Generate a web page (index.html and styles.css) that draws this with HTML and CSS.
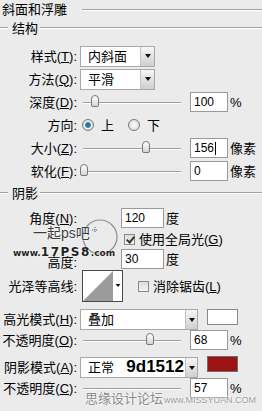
FILE: index.html
```html
<!DOCTYPE html>
<html lang="zh">

<head>
    <meta charset="UTF-8">
    <title>斜面和浮雕</title>
    <link rel="stylesheet" href="styles.css">
</head>

<body>
    <div class="dlg">
        <div class="title"><span>斜面和浮雕</span><i class="rule"></i></div>

        <div class="legend"><i class="rule lead"></i><span>结构</span><i class="rule"></i></div>
        <div class="group struct">
            <div class="row">
                <div class="lbl">样式(<u>T</u>):</div>
                <div class="select short"><span class="val">内斜面</span><span class="drop"></span></div>
            </div>
            <div class="row">
                <div class="lbl">方法(<u>Q</u>):</div>
                <div class="select short"><span class="val">平滑</span><span class="drop"></span></div>
            </div>
            <div class="row">
                <div class="lbl">深度(<u>D</u>):</div>
                <div class="slider"><i class="track"></i><i class="thumb" style="left:13px"></i></div>
                <div class="num">100</div>
                <div class="unit">%</div>
            </div>
            <div class="row">
                <div class="lbl">方向:</div>
                <i class="radio on"></i><span class="opt">上</span>
                <i class="radio second"></i><span class="opt">下</span>
            </div>
            <div class="row">
                <div class="lbl">大小(<u>Z</u>):</div>
                <div class="slider"><i class="track"></i><i class="thumb" style="left:64px"></i></div>
                <div class="num">156<i class="caret"></i></div>
                <div class="unit">像素</div>
            </div>
            <div class="row">
                <div class="lbl">软化(<u>F</u>):</div>
                <div class="slider"><i class="track"></i><i class="thumb" style="left:2px"></i></div>
                <div class="num">0</div>
                <div class="unit">像素</div>
            </div>
        </div>

        <div class="sep"></div>

        <div class="legend shadow-legend"><i class="rule lead"></i><span>阴影</span><i class="rule"></i></div>
        <div class="group">
            <div class="angle">
                <div class="lbl a1">角度(<u>N</u>):</div>
                <div class="lbl a3">高度:</div>
                <div class="dial">
                    <svg width="43" height="62" viewBox="0 0 43 62">
                        <circle cx="22" cy="30" r="17" fill="none" stroke="#8d8d8d" stroke-width="1.2" />
                        <path d="M17 20v6M14 23h6" stroke="#555" stroke-width="1" stroke-dasharray="1 1" />
                    </svg>
                </div>
                <div class="arow a1"><div class="num wide">120</div><div class="unit">度</div></div>
                <div class="arow a2"><i class="check on"></i><span class="opt">使用全局光(<u>G</u>)</span></div>
                <div class="arow a3"><div class="num wide">30</div><div class="unit">度</div></div>
            </div>

            <div class="row contour">
                <div class="lbl">光泽等高线:</div>
                <svg class="curve" width="41" height="32" viewBox="0 0 41 32">
                    <rect x="0.5" y="0.5" width="40" height="31" fill="#fff" stroke="#4a4a4a" />
                    <polygon points="1,31 31,1 31,31" fill="#9b9b9b" />
                    <path d="M33.5 14h5l-2.5 3z" fill="#111" />
                </svg>
                <i class="check aa"></i><span class="opt">消除锯齿(<u>L</u>)</span>
            </div>

            <div class="row mode">
                <div class="lbl">高光模式(<u>H</u>):</div>
                <div class="select long"><span class="val">叠加</span><span class="drop"></span></div>
                <div class="swatch white"></div>
            </div>
            <div class="row">
                <div class="lbl">不透明度(<u>O</u>):</div>
                <div class="slider"><i class="track"></i><i class="thumb" style="left:68px"></i></div>
                <div class="num">68</div>
                <div class="unit">%</div>
            </div>
            <div class="row mode">
                <div class="lbl">阴影模式(<u>A</u>):</div>
                <div class="select long"><span class="val">正常</span><b class="hex">9d1512</b><span class="drop"></span></div>
                <div class="swatch red"></div>
            </div>
            <div class="row">
                <div class="lbl">不透明度(<u>C</u>):</div>
                <div class="slider"><i class="track"></i></div>
                <div class="num">57</div>
                <div class="unit">%</div>
            </div>
        </div>

        <div class="mark mark-a">一起ps吧</div>
        <div class="mark mark-b"><small>www.</small>17PS8<small>.com</small></div>
        <div class="mark mark-c">思缘设计论坛<small>www.MISSYUAN.COM</small></div>
    </div>
</body>

</html>
```

FILE: styles.css
```css
* {
    box-sizing: border-box;
}

body {
    margin: 0;
    background: #ebebeb;
    color: #000;
    font: 13px/1 "Liberation Sans", "Noto Sans CJK SC", sans-serif;
}

.dlg {
    position: relative;
    width: 262px;
    height: 411px;
    overflow: hidden;
}

i {
    display: block;
}

.rule {
    flex: 1;
    height: 2px;
    border-top: 1px solid #a2a2a2;
    border-bottom: 1px solid #fff;
}

.title {
    display: flex;
    align-items: center;
    height: 19px;
    padding-left: 2px;
}

.title .rule {
    margin-left: 15px;
}

.legend {
    display: flex;
    align-items: center;
    height: 18px;
}

.legend .lead {
    flex: 0 0 8px;
}

.legend span {
    padding: 0 2px 0 4px;
}

.shadow-legend {
    margin-top: 2px;
}

.group {
    display: flex;
    flex-direction: column;
}

.struct {
    padding-top: 8px;
    gap: 1px;
}

.row {
    display: flex;
    align-items: center;
    height: 22px;
}

.lbl {
    width: 78px;
    flex: 0 0 78px;
    text-align: right;
    padding-right: 1px;
    white-space: nowrap;
}

.select {
    display: flex;
    align-items: center;
    height: 21px;
    margin-left: 2px;
    background: #fff;
    border: 1px solid #a8a8a8;
}

.select.short {
    width: 75px;
}

.select.long {
    width: 118px;
}

.select .val {
    flex: 1;
    padding-left: 7px;
}

.select .drop {
    position: relative;
    width: 14px;
    height: 100%;
    border-left: 1px solid #c4c4c4;
    background: linear-gradient(#f6f6f6, #cfcfcf);
}

.select.long .drop {
    width: 12px;
    flex: 0 0 12px;
}

.select .drop::after {
    content: "";
    position: absolute;
    left: 50%;
    top: 50%;
    margin: -2px 0 0 -3px;
    border-left: 3px solid transparent;
    border-right: 3px solid transparent;
    border-top: 4px solid #111;
}

.hex {
    font: bold 17px/1 "Liberation Sans", sans-serif;
    padding-right: 1px;
    margin-top: -2px;
}

.slider {
    position: relative;
    width: 103px;
    height: 14px;
}

.track {
    position: absolute;
    left: 5px;
    right: 0;
    top: 7px;
    height: 2px;
    border-top: 1px solid #9d9d9d;
    border-bottom: 1px solid #fff;
}

.thumb {
    position: absolute;
    top: 0;
    width: 8px;
    height: 12px;
    border: 1px solid #787878;
    border-radius: 4px 4px 2px 2px;
    background: linear-gradient(#fff, #d6d6d6);
}

.num {
    display: flex;
    align-items: center;
    width: 38px;
    height: 20px;
    margin-left: 9px;
    padding-left: 3px;
    background: #fff;
    border: 1px solid #9a9a9a;
    font-size: 12px;
}

.num.wide {
    width: 43px;
    margin-left: 0;
}

.caret {
    width: 1px;
    height: 13px;
    margin-left: 1px;
    background: #000;
}

.unit {
    margin-left: 2px;
}

.radio {
    width: 12px;
    height: 12px;
    margin: 0 3px 0 4px;
    border: 1px solid #6f7a80;
    border-radius: 50%;
    background: radial-gradient(#fdfdfd, #d4d4d4);
}

.radio.on {
    background: radial-gradient(circle, #1f5f7a 0, #3c8fb0 2.5px, #e9eef0 3.5px, #c9d0d3 100%);
}

.radio.second {
    margin-left: 14px;
}

.check {
    width: 11px;
    height: 11px;
    border: 1px solid #8a8a8a;
    background: linear-gradient(#dcdcdc, #f4f4f4);
    position: relative;
}

.check.on::after {
    content: "";
    position: absolute;
    left: 3px;
    top: 0;
    width: 3px;
    height: 6px;
    border-right: 2px solid #333;
    border-bottom: 2px solid #333;
    transform: rotate(40deg);
}

.opt {
    margin-left: 4px;
}

.angle {
    display: grid;
    grid-template-columns: 78px 43px 1fr;
    grid-template-rows: 22px 20px 20px;
    margin-top: 5px;
}

.angle .lbl {
    grid-column: 1;
    align-self: center;
}

.angle .lbl.a3 {
    padding-top: 7px;
}

.a1 {
    grid-row: 1;
}

.a2 {
    grid-row: 2;
}

.a3 {
    grid-row: 3;
}

.dial {
    grid-column: 2;
    grid-row: 1 / 4;
}

.arow {
    grid-column: 3;
    display: flex;
    align-items: center;
}

.arow .check {
    margin-left: 3px;
}

.contour {
    height: 32px;
    margin-top: 1px;
}

.curve {
    margin-left: 4px;
}

.check.aa {
    margin-left: 15px;
}

.mode {
    height: 21px;
    margin-top: 7px;
}

.mode + .row {
    height: 20px;
}

.swatch {
    align-self: flex-start;
    width: 31px;
    height: 16px;
    margin-left: 9px;
    border: 1px solid #8a8a8a;
}

.swatch.white {
    background: #fff;
}

.swatch.red {
    margin-top: -1px;
    background: #9d1512;
    border-color: #6e6e6e;
}

.mark {
    position: absolute;
    white-space: nowrap;
    text-shadow: 0 0 2px #fff, 0 0 1px #fff;
}

.mark-a {
    left: 33px;
    top: 226px;
    font-size: 14px;
    color: #3c3c3c;
}

.mark-b {
    left: 13px;
    top: 246px;
    font: bold 12px/1 "DejaVu Sans", sans-serif;
    color: #222;
    letter-spacing: 1.5px;
}

.mark-b small {
    font-size: 9px;
    letter-spacing: 0;
}

.mark-c {
    left: 85px;
    top: 392px;
    color: #8a8a8a;
    font-size: 13px;
    text-shadow: 0 0 2px #fff, 0 0 2px #fff;
}

.mark-c small {
    margin-left: 1px;
    font-size: 9px;
    color: #9a9a9a;
}
```
